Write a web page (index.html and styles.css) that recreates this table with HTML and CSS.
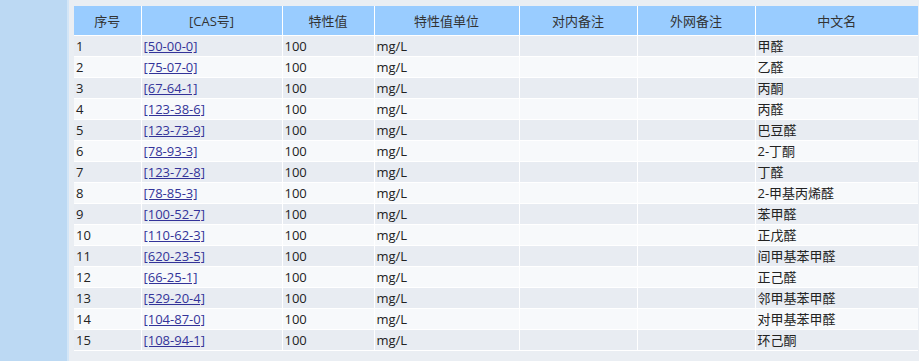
FILE: index.html
```html
<!DOCTYPE html>
<html>
<head>
<meta charset="utf-8">
<link rel="stylesheet" href="styles.css">
</head>
<body>
<div class="layout">
  <aside class="sidebar"></aside>
  <main class="main">
    <table class="grid">
      <colgroup>
        <col class="c1"><col class="c2"><col class="c3"><col class="c4"><col class="c5"><col class="c6"><col class="c7">
      </colgroup>
      <thead>
        <tr><th>序号</th><th>[CAS号]</th><th>特性值</th><th>特性值单位</th><th>对内备注</th><th>外网备注</th><th>中文名</th></tr>
      </thead>
      <tbody>
        <tr><td>1</td><td><a href="#">[50-00-0]</a></td><td>100</td><td>mg/L</td><td></td><td></td><td>甲醛</td></tr>
        <tr><td>2</td><td><a href="#">[75-07-0]</a></td><td>100</td><td>mg/L</td><td></td><td></td><td>乙醛</td></tr>
        <tr><td>3</td><td><a href="#">[67-64-1]</a></td><td>100</td><td>mg/L</td><td></td><td></td><td>丙酮</td></tr>
        <tr><td>4</td><td><a href="#">[123-38-6]</a></td><td>100</td><td>mg/L</td><td></td><td></td><td>丙醛</td></tr>
        <tr><td>5</td><td><a href="#">[123-73-9]</a></td><td>100</td><td>mg/L</td><td></td><td></td><td>巴豆醛</td></tr>
        <tr><td>6</td><td><a href="#">[78-93-3]</a></td><td>100</td><td>mg/L</td><td></td><td></td><td>2-丁酮</td></tr>
        <tr><td>7</td><td><a href="#">[123-72-8]</a></td><td>100</td><td>mg/L</td><td></td><td></td><td>丁醛</td></tr>
        <tr><td>8</td><td><a href="#">[78-85-3]</a></td><td>100</td><td>mg/L</td><td></td><td></td><td>2-甲基丙烯醛</td></tr>
        <tr><td>9</td><td><a href="#">[100-52-7]</a></td><td>100</td><td>mg/L</td><td></td><td></td><td>苯甲醛</td></tr>
        <tr><td>10</td><td><a href="#">[110-62-3]</a></td><td>100</td><td>mg/L</td><td></td><td></td><td>正戊醛</td></tr>
        <tr><td>11</td><td><a href="#">[620-23-5]</a></td><td>100</td><td>mg/L</td><td></td><td></td><td>间甲基苯甲醛</td></tr>
        <tr><td>12</td><td><a href="#">[66-25-1]</a></td><td>100</td><td>mg/L</td><td></td><td></td><td>正己醛</td></tr>
        <tr><td>13</td><td><a href="#">[529-20-4]</a></td><td>100</td><td>mg/L</td><td></td><td></td><td>邻甲基苯甲醛</td></tr>
        <tr><td>14</td><td><a href="#">[104-87-0]</a></td><td>100</td><td>mg/L</td><td></td><td></td><td>对甲基苯甲醛</td></tr>
        <tr><td>15</td><td><a href="#">[108-94-1]</a></td><td>100</td><td>mg/L</td><td></td><td></td><td>环己酮</td></tr>
      </tbody>
    </table>
  </main>
</div>
</body>
</html>
```

FILE: styles.css
```css
html, body {
  margin: 0;
  padding: 0;
  height: 100%;
  overflow: hidden;
}
body {
  font-family: "Open Sans", "Noto Sans", "Noto Sans CJK SC", sans-serif;
  font-size: 13px;
  color: #222;
  background: #eaeef3;
}
.layout {
  display: flex;
  height: 100%;
}
.sidebar {
  flex: 0 0 67px;
  background: #bcd9f3;
  border-right: 2px solid #d3e6f7;
}
.main {
  flex: 1;
  min-width: 0;
  padding: 6px 0 0 5px;
  background: #eaeef3;
}
.grid {
  table-layout: fixed;
  border-collapse: collapse;
  width: 844px;
}
.c1 { width: 67px; }
.c2 { width: 141px; }
.c3 { width: 92px; }
.c4 { width: 145px; }
.c5 { width: 118px; }
.c6 { width: 118px; }
.c7 { width: 163px; }
.grid th {
  background: #99ccff;
  color: #333;
  font-weight: normal;
  height: 29px;
  padding: 0;
  border: 1px solid #fff;
  border-top: none;
  text-align: center;
}
.grid td {
  height: 20px;
  padding: 0 0 0 2px;
  border: 1px solid #fff;
  white-space: nowrap;
  line-height: 20px;
}
.grid th:first-child, .grid td:first-child { border-left: none; }
.grid th:last-child, .grid td:last-child { border-right: none; }
.grid tbody tr:nth-child(odd) td { background: #e8ecf2; }
.grid tbody tr:nth-child(even) td { background: #f7f9fb; }
.grid a {
  color: #333399;
  text-decoration: underline;
}
```
